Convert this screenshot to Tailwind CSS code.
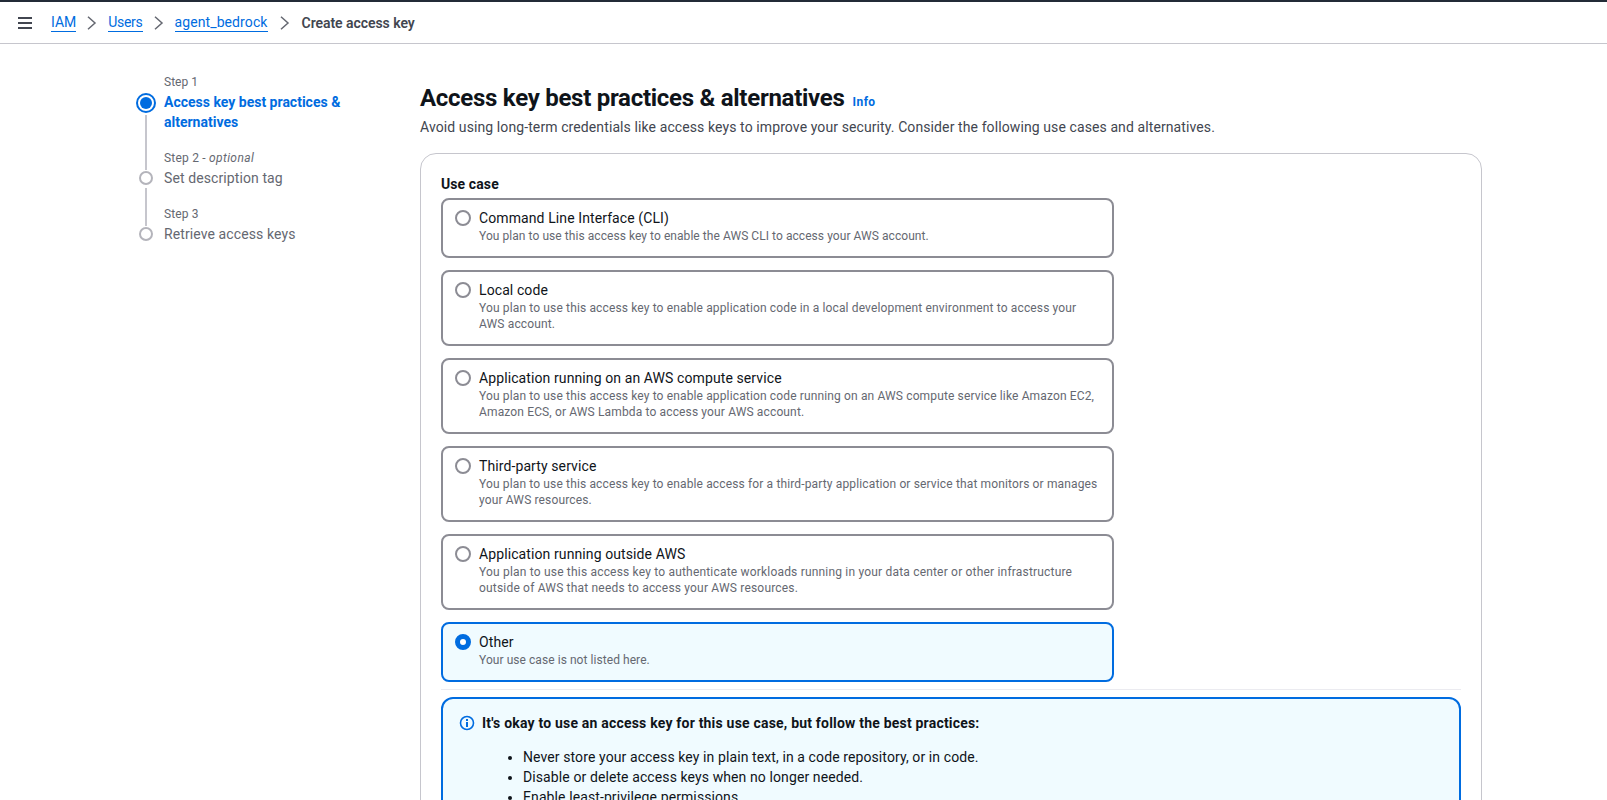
<!DOCTYPE html>
<html lang="en">
<head>
  <meta charset="UTF-8" />
  <title>Create access key</title>
  <script src="https://cdn.jsdelivr.net/npm/@tailwindcss/browser@4"></script>
</head>
<body class="h-[800px] overflow-hidden bg-white font-['Roboto',sans-serif] text-[14px] leading-[20px] tracking-[0.1px] text-[#0f141a]">

  <!-- Breadcrumbs -->
  <header class="flex h-[44px] items-center border-t-2 border-b border-t-[#232b37] border-b-[#c6c6cd] pl-[17px]">
    <svg class="h-[16px] w-[16px] text-[#424650]" viewBox="0 0 16 16" fill="none" stroke="currentColor" stroke-width="2"><path d="M1 3h14M1 8h14M1 13h14"/></svg>
    <nav class="ml-[18px] flex items-center">
      <a class="border-b border-[#006ce0] leading-[18px] tracking-normal text-[#006ce0]">IAM</a>
      <svg class="mx-[9px] h-[14px] w-[14px] text-[#656871]" viewBox="0 0 14 14" fill="none" stroke="currentColor" stroke-width="1.5"><path d="M3 .8L10 7l-7 6.2"/></svg>
      <a class="border-b border-[#006ce0] leading-[18px] tracking-[-0.3px] text-[#006ce0]">Users</a>
      <svg class="mx-[9px] h-[14px] w-[14px] text-[#656871]" viewBox="0 0 14 14" fill="none" stroke="currentColor" stroke-width="1.5"><path d="M3 .8L10 7l-7 6.2"/></svg>
      <a class="border-b border-[#006ce0] leading-[18px] text-[#006ce0]">agent_bedrock</a>
      <svg class="mx-[10px] h-[14px] w-[14px] text-[#656871]" viewBox="0 0 14 14" fill="none" stroke="currentColor" stroke-width="1.5"><path d="M3 .8L10 7l-7 6.2"/></svg>
      <span class="font-semibold tracking-[-0.05px] text-[#424650]">Create access key</span>
    </nav>
  </header>

  <div class="flex pl-[136px] pt-[28px]">
    <!-- Wizard steps -->
    <ol class="w-[284px] shrink-0">
      <li class="flex h-[76px] items-start gap-[8px]">
        <div class="flex w-[20px] flex-col items-center pt-[21px]">
          <span class="flex h-[20px] w-[20px] shrink-0 items-center justify-center rounded-full border-2 border-[#006ce0]"><span class="h-[12px] w-[12px] rounded-full bg-[#006ce0]"></span></span>
          <span class="mt-[2px] h-[55px] w-[2px] shrink-0 bg-[#c6c6cd]"></span>
        </div>
        <div class="w-[190px]">
          <div class="text-[12px] leading-[20px] tracking-normal text-[#656871]">Step 1</div>
          <div class="font-bold tracking-normal text-[#006ce0]">Access key best practices &amp; alternatives</div>
        </div>
      </li>
      <li class="flex h-[56px] items-start gap-[8px]">
        <div class="flex w-[20px] flex-col items-center pt-[23px]">
          <span class="h-[14px] w-[14px] shrink-0 rounded-full border-2 border-[#b4b4bb]"></span>
          <span class="mt-[3px] h-[38px] w-[2px] shrink-0 bg-[#c6c6cd]"></span>
        </div>
        <div>
          <div class="text-[12px] leading-[20px] tracking-[0.2px] text-[#656871]">Step 2 - <em class="tracking-[0.4px]">optional</em></div>
          <div class="text-[#656871]">Set description tag</div>
        </div>
      </li>
      <li class="flex items-start gap-[8px]">
        <div class="flex w-[20px] flex-col items-center pt-[23px]">
          <span class="h-[14px] w-[14px] shrink-0 rounded-full border-2 border-[#b4b4bb]"></span>
        </div>
        <div>
          <div class="text-[12px] leading-[20px] text-[#656871]">Step 3</div>
          <div class="text-[#656871]">Retrieve access keys</div>
        </div>
      </li>
    </ol>

    <!-- Main content -->
    <main class="w-[1062px] shrink-0">
      <div class="flex items-baseline gap-[8px] pt-[11px]">
        <h1 class="text-[24px] font-bold leading-[30px] tracking-[-0.27px] text-[#0f141a]">Access key best practices &amp; alternatives</h1>
        <a class="text-[12px] font-bold tracking-[0.4px] text-[#006ce0]">Info</a>
      </div>
      <p class="mt-[4px] text-[#424650]">Avoid using long-term credentials like access keys to improve your security. Consider the following use cases and alternatives.</p>

      <section class="mt-[16px] h-[700px] rounded-[16px] border border-[#c6c6cd] px-[20px] pt-[20px]">
        <div class="text-[14px] font-bold leading-[20px]">Use case</div>
        <div class="mt-[4px] flex w-[673px] flex-col gap-[12px]">
          <label class="flex h-[60px] gap-[8px] rounded-[8px] border-2 border-[#8c8c94] px-[12px] pt-[8px]">
            <span class="mt-[2px] h-[16px] w-[16px] shrink-0 rounded-full border-2 border-[#8c8c94]"></span>
            <span class="block"><span class="block">Command Line Interface (CLI)</span><span class="block text-[12px] leading-[16px] tracking-[0.06px] text-[#656871]">You plan to use this access key to enable the AWS CLI to access your AWS account.</span></span>
          </label>
          <label class="flex h-[76px] gap-[8px] rounded-[8px] border-2 border-[#8c8c94] px-[12px] pt-[8px]">
            <span class="mt-[2px] h-[16px] w-[16px] shrink-0 rounded-full border-2 border-[#8c8c94]"></span>
            <span class="block"><span class="block">Local code</span><span class="block text-[12px] leading-[16px] tracking-[0.14px] text-[#656871]">You plan to use this access key to enable application code in a local development environment to access your<br>AWS account.</span></span>
          </label>
          <label class="flex h-[76px] gap-[8px] rounded-[8px] border-2 border-[#8c8c94] px-[12px] pt-[8px]">
            <span class="mt-[2px] h-[16px] w-[16px] shrink-0 rounded-full border-2 border-[#8c8c94]"></span>
            <span class="block"><span class="block">Application running on an AWS compute service</span><span class="block text-[12px] leading-[16px] tracking-[0.14px] text-[#656871]">You plan to use this access key to enable application code running on an AWS compute service like Amazon EC2,<br>Amazon ECS, or AWS Lambda to access your AWS account.</span></span>
          </label>
          <label class="flex h-[76px] gap-[8px] rounded-[8px] border-2 border-[#8c8c94] px-[12px] pt-[8px]">
            <span class="mt-[2px] h-[16px] w-[16px] shrink-0 rounded-full border-2 border-[#8c8c94]"></span>
            <span class="block"><span class="block">Third-party service</span><span class="block text-[12px] leading-[16px] tracking-[0.14px] text-[#656871]">You plan to use this access key to enable access for a third-party application or service that monitors or manages<br>your AWS resources.</span></span>
          </label>
          <label class="flex h-[76px] gap-[8px] rounded-[8px] border-2 border-[#8c8c94] px-[12px] pt-[8px]">
            <span class="mt-[2px] h-[16px] w-[16px] shrink-0 rounded-full border-2 border-[#8c8c94]"></span>
            <span class="block"><span class="block">Application running outside AWS</span><span class="block text-[12px] leading-[16px] tracking-[0.19px] text-[#656871]">You plan to use this access key to authenticate workloads running in your data center or other infrastructure<br>outside of AWS that needs to access your AWS resources.</span></span>
          </label>
          <label class="flex h-[60px] gap-[8px] rounded-[8px] border-2 border-[#006ce0] bg-[#f0fbff] px-[12px] pt-[8px]">
            <span class="mt-[2px] h-[16px] w-[16px] shrink-0 rounded-full border-[5px] border-[#006ce0] bg-white"></span>
            <span class="block"><span class="block">Other</span><span class="block text-[12px] leading-[16px] tracking-[0.06px] text-[#656871]">Your use case is not listed here.</span></span>
          </label>
        </div>
        <div class="mt-[7px] border-t border-[#ebebf0]"></div>

        <!-- Info alert -->
        <div class="mt-[7px] h-[300px] rounded-[12px] border-2 border-[#006ce0] bg-[#f0fbff] pl-[16px] pt-[14px]">
          <div class="flex items-center gap-[7px]">
            <svg class="h-[16px] w-[16px] text-[#006ce0]" viewBox="0 0 16 16" fill="none" stroke="currentColor" stroke-width="2"><circle cx="8" cy="8" r="6.5" stroke-width="1.6"/><path d="M8 7v5M8 4v2"/></svg>
            <span class="font-bold tracking-[0.2px]">It's okay to use an access key for this use case, but follow the best practices:</span>
          </div>
          <ul class="mt-[14px] list-disc pl-[64px]">
            <li>Never store your access key in plain text, in a code repository, or in code.</li>
            <li>Disable or delete access keys when no longer needed.</li>
            <li>Enable least-privilege permissions.</li>
          </ul>
        </div>
      </section>
    </main>
  </div>

</body>
</html>
